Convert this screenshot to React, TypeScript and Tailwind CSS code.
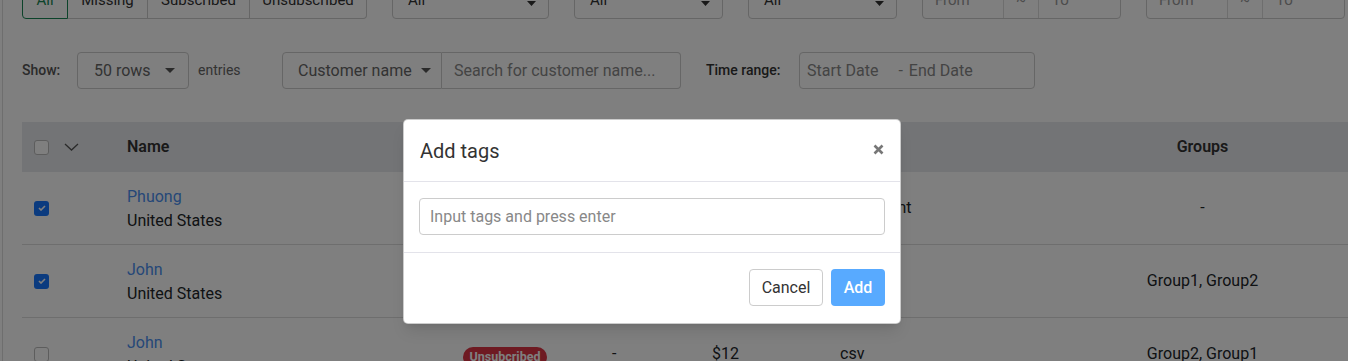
import React from "react";

const font = "font-['Roboto','Noto_Sans',sans-serif]";

function Caret() {
  return (
    <svg width="10" height="5" viewBox="0 0 10 5" className="shrink-0 text-[#555]">
      <path d="M0 0h10L5 5z" fill="currentColor" />
    </svg>
  );
}

function SortCaret() {
  return (
    <svg width="9" height="12" viewBox="0 0 9 12" className="shrink-0 text-[#333]">
      <path d="M0 5h9L4.5 0z M0 7h9L4.5 12z" fill="currentColor" />
    </svg>
  );
}

function Box({ checked }: { checked?: boolean }) {
  if (checked) {
    return (
      <span className="flex h-[15px] w-[15px] items-center justify-center rounded-[3px] bg-[#1677ff]">
        <svg width="8" height="6" viewBox="0 0 8 6">
          <path d="M1 3l2 2 4-4" fill="none" stroke="#fff" strokeWidth="1.6" />
        </svg>
      </span>
    );
  }
  return <span className="block h-[15px] w-[15px] rounded-[3px] border border-[#bbb] bg-white" />;
}

function RangeBox() {
  return (
    <div className="ml-[25px] flex h-[38px] w-[199px] rounded border border-[#ccc] text-[15px] text-[#999]">
      <div className="flex w-[81px] items-center border-r border-[#ddd] pl-3">From</div>
      <div className="flex w-[35px] items-center justify-center border-r border-[#ddd]">~</div>
      <div className="flex flex-1 items-center pl-[13px]">To</div>
    </div>
  );
}

function TopSelect({ w }: { w: string }) {
  return (
    <div className={`ml-[25px] flex h-[38px] items-center justify-between rounded border border-[#ccc] pl-[15px] pr-[12px] text-[15px] text-[#333] ${w}`}>
      <span>All</span>
      <SortCaret />
    </div>
  );
}

const rows = [
  { name: "Phuong", checked: true, status: "", c4: "", c5: "", c6: "Storefront", groups: "-" },
  { name: "John", checked: true, status: "", c4: "", c5: "", c6: "", groups: "Group1, Group2" },
  { name: "John", checked: false, status: "Unsubcribed", c4: "-", c5: "$12", c6: "csv", groups: "Group2, Group1" },
];

const grid = "grid grid-cols-[83px_315px_170px_100px_128px_239px_291px]";

export default function App() {
  return (
    <div className={`relative h-[361px] overflow-hidden bg-white text-[#212529] ${font}`}>
      <div className="ml-[2px] -mt-[19px] border-l border-[#ddd] pl-[19px]">
        {/* filters */}
        <div className="flex h-[38px]">
          <div className="flex text-[15px]">
            <div className="flex w-[46px] items-center justify-center rounded-l border border-[#198754] text-[#198754]">All</div>
            <div className="flex w-[80px] items-center justify-center border-y border-r border-[#ccc] text-[#333]">Missing</div>
            <div className="flex w-[102px] items-center justify-center border-y border-r border-[#ccc] text-[#333]">Subscribed</div>
            <div className="flex w-[117px] items-center justify-center rounded-r border-y border-r border-[#ccc] text-[#333]">Unsubscribed</div>
          </div>
          <TopSelect w="w-[157px]" />
          <TopSelect w="w-[149px]" />
          <TopSelect w="w-[149px]" />
          <RangeBox />
          <RangeBox />
        </div>

        <div className="mt-[33px] flex h-[37px] items-center">
          <span className="w-[55px] text-[14px] font-medium text-[#555]">Show:</span>
          <div className="flex h-full w-[112px] items-center justify-between rounded border border-[#ccc] pl-4 pr-[13px] text-[16px] text-[#666]">
            <span>50 rows</span>
            <Caret />
          </div>
          <span className="w-[93px] pl-[9px] text-[14px] text-[#666]">entries</span>
          <div className="flex h-full">
            <div className="flex w-[160px] items-center justify-between rounded-l border border-[#ccc] pl-[15px] pr-[10px] text-[16px] text-[#666]">
              <span>Customer name</span>
              <Caret />
            </div>
            <div className="flex w-[239px] items-center rounded-r border-y border-r border-[#ccc] pl-3 text-[16px] text-[#888]">
              Search for customer name...
            </div>
          </div>
          <span className="ml-[25px] w-[93px] text-[14px] font-medium text-[#333]">Time range:</span>
          <div className="flex h-full w-[236px] items-center rounded border border-[#ccc] pl-[7px] text-[16px] text-[#888]">
            <span>Start Date</span>
            <span className="ml-[20px]">-</span>
            <span className="ml-[6px]">End Date</span>
          </div>
        </div>

        {/* table */}
        <div className="mt-[33px]">
          <div className={`${grid} h-[50px] items-center bg-[#e6e8ec] text-[16px] font-semibold text-[#333]`}>
            <div className="flex items-center pl-3">
              <Box />
              <svg width="15" height="8" viewBox="0 0 15 8" className="ml-[15px]">
                <path d="M1 1l6.5 6L14 1" fill="none" stroke="#555" strokeWidth="1.3" />
              </svg>
            </div>
            <div className="px-[22px]">Name</div>
            <div />
            <div />
            <div />
            <div />
            <div className="text-center">Groups</div>
          </div>
          {rows.map((r, i) => (
            <div key={i} className={`${grid} h-[73px] items-center border-b border-[#dcdcdc] text-[16px]`}>
              <div className="pl-3">
                <Box checked={r.checked} />
              </div>
              <div className="px-[22px] pt-[1px] leading-6">
                <div className="text-[#4b8ff0]">{r.name}</div>
                <div>United States</div>
              </div>
              <div className="flex justify-center pt-[5px]">
                {r.status && (
                  <span className="rounded-full bg-[#dc3545] px-[7px] text-[12.5px] font-bold leading-[20px] text-white">{r.status}</span>
                )}
              </div>
              <div className="px-[22px]">{r.c4}</div>
              <div className="px-[22px]">{r.c5}</div>
              <div className="px-[22px]">{r.c6}</div>
              <div className="text-center">{r.groups}</div>
            </div>
          ))}
        </div>
      </div>

      {/* backdrop */}
      <div className="absolute inset-0 bg-black/50" />

      {/* modal */}
      <div className="absolute left-[403px] top-[119px] w-[498px] rounded-[5px] border border-black/20 bg-white shadow-lg">
        <div className="flex h-[62px] items-center justify-between border-b border-[#e3e3ea] px-4">
          <span className="text-[20px] text-[#333]">Add tags</span>
          <svg width="11" height="11" viewBox="0 0 11 11" className="-mt-[3px]">
            <path d="M1.5 1.5l8 8M9.5 1.5l-8 8" stroke="#777" strokeWidth="2.6" />
          </svg>
        </div>
        <div className="border-b border-[#e3e3ea] px-[15px] pt-4 pb-[17px]">
          <div className="flex h-[37px] items-center rounded border border-[#ccc] px-[10px] text-[16px] text-[#888]">
            Input tags and press enter
          </div>
        </div>
        <div className="flex justify-end gap-2 px-[15px] pt-4 pb-[17px]">
          <button className="h-[37px] w-[74px] rounded border border-[#ccc] bg-white text-[16px] text-[#333]">Cancel</button>
          <button className="h-[37px] w-[54px] rounded bg-[#58aaff] text-[16px] font-medium text-white">Add</button>
        </div>
      </div>
    </div>
  );
}
